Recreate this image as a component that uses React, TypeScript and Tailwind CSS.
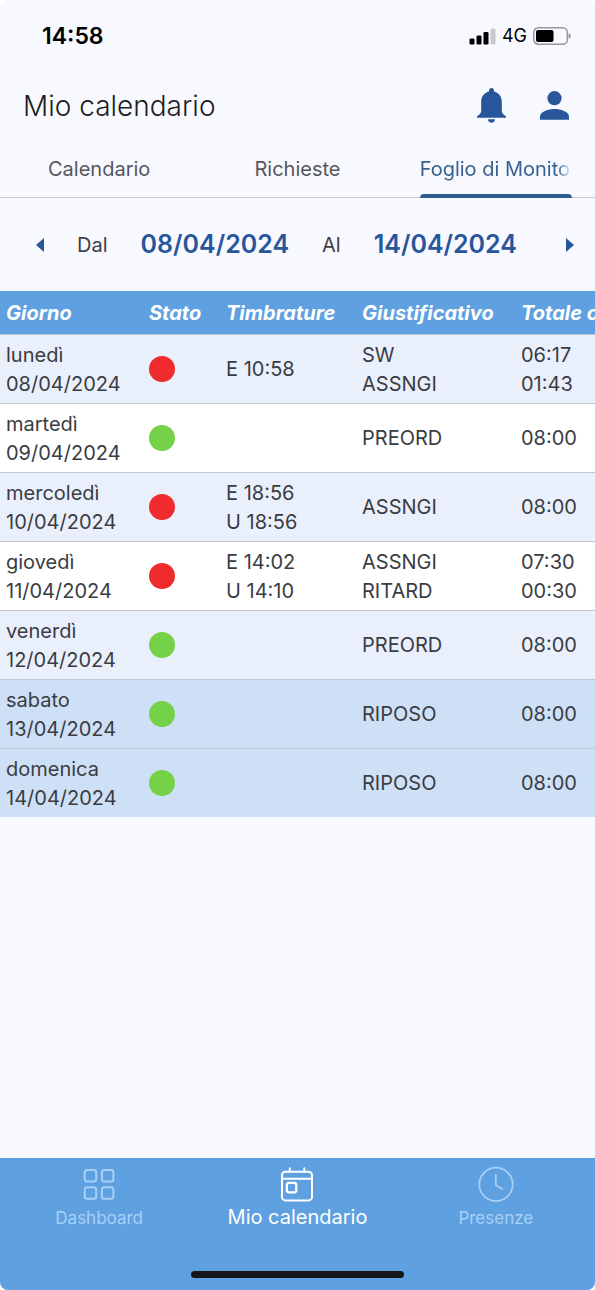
import { useState } from "react";

type Day = {
  name: string;
  date: string;
  ok: boolean;
  stamps: string[];
  reasons: string[];
  totals: string[];
  weekend?: boolean;
};

const DAYS: Day[] = [
  { name: "lunedì", date: "08/04/2024", ok: false, stamps: ["E 10:58"], reasons: ["SW", "ASSNGI"], totals: ["06:17", "01:43"] },
  { name: "martedì", date: "09/04/2024", ok: true, stamps: [], reasons: ["PREORD"], totals: ["08:00"] },
  { name: "mercoledì", date: "10/04/2024", ok: false, stamps: ["E 18:56", "U 18:56"], reasons: ["ASSNGI"], totals: ["08:00"] },
  { name: "giovedì", date: "11/04/2024", ok: false, stamps: ["E 14:02", "U 14:10"], reasons: ["ASSNGI", "RITARD"], totals: ["07:30", "00:30"] },
  { name: "venerdì", date: "12/04/2024", ok: true, stamps: [], reasons: ["PREORD"], totals: ["08:00"] },
  { name: "sabato", date: "13/04/2024", ok: true, stamps: [], reasons: ["RIPOSO"], totals: ["08:00"], weekend: true },
  { name: "domenica", date: "14/04/2024", ok: true, stamps: [], reasons: ["RIPOSO"], totals: ["08:00"], weekend: true },
];

const TABS = ["Calendario", "Richieste", "Foglio di Monitoraggio"];

function StatusBar() {
  return (
    <div className="flex h-[72px] items-center justify-between pr-6 pl-[42px] text-black">
      <span className="text-[23px] font-semibold">14:58</span>
      <div className="flex items-center gap-1.5">
        <svg className="h-[17px] w-[27px]" viewBox="0 0 27 17">
          <rect x="0.5" y="10.5" width="5" height="6" rx="1.2" />
          <rect x="7.5" y="7.5" width="5" height="9" rx="1.2" />
          <rect x="14.5" y="4" width="5" height="12.5" rx="1.2" />
          <rect x="21.5" y="0.5" width="5" height="16" rx="1.2" fill="#c8c9d0" />
        </svg>
        <span className="text-lg">4G</span>
        <svg className="h-[18px] w-[38px]" viewBox="0 0 38 18">
          <rect x="0.8" y="0.8" width="33.5" height="16.4" rx="4.5" fill="none" stroke="#97989c" strokeWidth="1.5" />
          <rect x="3" y="3" width="17.5" height="12" rx="2" />
          <path d="M35.5 6.2c1.6.5 2.3 1.5 2.3 2.8s-.7 2.3-2.3 2.8z" fill="#97989c" />
        </svg>
      </div>
    </div>
  );
}

function Stack({ lines }: { lines: string[] }) {
  return (
    <>
      {lines.map((line) => (
        <div key={line}>{line}</div>
      ))}
    </>
  );
}

function TimesheetTable() {
  return (
    <div className="overflow-x-auto [scrollbar-width:none]">
      <table className="w-full min-w-[640px] table-fixed border-collapse text-left text-xl leading-[29px] whitespace-nowrap">
        <colgroup>
          <col className="w-[143px]" />
          <col className="w-[77px]" />
          <col className="w-[136px]" />
          <col className="w-[159px]" />
          <col />
        </colgroup>
        <thead>
          <tr className="h-[43px] border-b border-[#c3c5ce] bg-[#5ea0e0] text-white italic">
            <th scope="col" className="px-1.5 pt-0.5 font-bold">Giorno</th>
            <th scope="col" className="px-1.5 pt-0.5 font-bold">Stato</th>
            <th scope="col" className="px-1.5 pt-0.5 font-bold">Timbrature</th>
            <th scope="col" className="px-1.5 pt-0.5 font-bold">Giustificativo</th>
            <th scope="col" className="px-1.5 pt-0.5 font-bold">Totale ore</th>
          </tr>
        </thead>
        <tbody>
          {DAYS.map((day) => (
            <tr
              key={day.date}
              className={`border-b border-[#c3c5ce] text-[#3a3c43] last:border-b-0 ${
                day.weekend ? "bg-[#cee0f6]" : "odd:bg-[#eaeffc] even:bg-white"
              }`}
            >
              <td className="px-1.5 pt-1.5 pb-1">
                <Stack lines={[day.name, day.date]} />
              </td>
              <td className="px-1.5">
                <div
                  role="img"
                  aria-label={day.ok ? "Regolare" : "Anomalia"}
                  className={`size-[26px] rounded-full ${day.ok ? "bg-[#74d148]" : "bg-[#ef2b2d]"}`}
                />
              </td>
              <td className="px-1.5 pt-1.5 pb-1"><Stack lines={day.stamps} /></td>
              <td className="px-1.5 pt-1.5 pb-1"><Stack lines={day.reasons} /></td>
              <td className="px-1.5 pt-1.5 pb-1"><Stack lines={day.totals} /></td>
            </tr>
          ))}
        </tbody>
      </table>
    </div>
  );
}

export default function App() {
  const [tab, setTab] = useState(2);

  return (
    <div className="bg-white font-['Inter','Liberation_Sans',sans-serif]">
      <div className="flex min-h-screen flex-col overflow-hidden rounded-lg bg-[#f8f9fe]">
        <StatusBar />

        <header className="flex h-[68px] items-center justify-between pr-[26px] pl-[23px]">
          <h1 className="text-[28px] font-light text-[#1d1e24]">Mio calendario</h1>
          <div className="flex items-center gap-[34px] text-[#28569a]">
            <button type="button" aria-label="Notifiche">
              <svg className="h-[37px] w-[29px]" viewBox="0 0 29 37" fill="currentColor">
                <path d="M14.500 0c1.500 0 2.500 1 2.500 2.300v1.100c5 1.200 7.800 5.200 7.800 10.200v9c0 2.600 1.400 4.200 4.200 5.600v1.500H0v-1.500c2.800-1.400 4.200-3 4.200-5.600v-9c0-5 2.800-9 7.800-10.200V2.300C12 1 13 0 14.500 0z" />
                <path d="M11 31.300h7c0 2-1.500 3.400-3.500 3.400S11 33.300 11 31.300z" />
              </svg>
            </button>
            <button type="button" aria-label="Profilo">
              <svg className="h-[31px] w-[29px]" viewBox="0 0 29 31" fill="currentColor">
                <circle cx="14.5" cy="7.200" r="7.100" />
                <path d="M0 28.800v-3.200C0 20.500 8.500 18 14.500 18S29 20.500 29 25.600v3.200z" />
              </svg>
            </button>
          </div>
        </header>

        <div role="tablist" className="grid h-[58px] grid-cols-3 border-b border-[#c9cad3] text-xl">
          {TABS.map((label, i) => (
            <button
              key={label}
              type="button"
              role="tab"
              aria-selected={tab === i}
              onClick={() => setTab(i)}
              className={`flex min-w-0 flex-col px-[23px] ${tab === i ? "text-[#38628f]" : "text-[#55575e]"}`}
            >
              <span
                className={`h-[54px] w-full overflow-hidden pt-px leading-[56px] whitespace-nowrap ${
                  i === 2 ? "mask-r-from-90% text-left" : "text-center"
                }`}
              >
                {label}
              </span>
              <span className={`h-1 w-full rounded-t-full ${tab === i ? "bg-[#2f5d8f]" : ""}`} />
            </button>
          ))}
        </div>

        <div className="flex h-[93px] items-center justify-between pr-[21px] pl-9 text-xl text-[#3d3f46]">
          <button type="button" aria-label="Periodo precedente" className="text-[#28569a]">
            <svg className="h-[14px] w-[8px]" viewBox="0 0 8 14" fill="currentColor">
              <path d="M8 0v14L0 7z" />
            </svg>
          </button>
          <span>Dal</span>
          <button type="button" className="text-[25px] font-semibold text-[#28569a]">08/04/2024</button>
          <span>Al</span>
          <button type="button" className="text-[25px] font-semibold text-[#28569a]">14/04/2024</button>
          <button type="button" aria-label="Periodo successivo" className="pl-4 text-[#28569a]">
            <svg className="h-[14px] w-[8px]" viewBox="0 0 8 14" fill="currentColor">
              <path d="M0 0v14l8-7z" />
            </svg>
          </button>
        </div>

        <main className="flex-1">
          <TimesheetTable />
        </main>

        <nav className="flex h-[132px] flex-col justify-between bg-[#5ea0e0] pb-3">
          <div className="grid grid-cols-3 pt-2">
            <a href="#dashboard" className="flex flex-col items-center text-[#a9d0f7]">
              <svg className="size-[36px]" viewBox="0 0 36 36" fill="none" stroke="currentColor" strokeWidth="2">
                <rect x="3.700" y="4" width="11.500" height="11.500" rx="2.500" />
                <rect x="20.900" y="4" width="11.500" height="11.500" rx="2.500" />
                <rect x="3.700" y="21.300" width="11.500" height="11.500" rx="2.500" />
                <rect x="20.900" y="21.300" width="11.500" height="11.500" rx="2.500" />
              </svg>
              <span className="text-[17px] leading-[32px]">Dashboard</span>
            </a>
            <a href="#calendario" aria-current="page" className="flex flex-col items-center text-white">
              <svg className="size-[36px]" viewBox="0 0 36 36" fill="none" stroke="currentColor" strokeWidth="2" strokeLinecap="round">
                <rect x="3" y="5.800" width="30" height="28.600" rx="3.500" />
                <path d="M3 12.800h30M10.800 2.200v3.500M25.300 2.200v3.500" />
                <rect x="7.800" y="16.800" width="9.500" height="9.500" rx="2" strokeWidth="2.300" />
              </svg>
              <span className="text-xl leading-[30px]">Mio calendario</span>
            </a>
            <a href="#presenze" className="flex flex-col items-center text-[#a9d0f7]">
              <svg className="size-[36px]" viewBox="0 0 36 36" fill="none" stroke="currentColor" strokeWidth="1.700" strokeLinecap="round" strokeLinejoin="round">
                <circle cx="18" cy="18.400" r="16.700" />
                <path d="M17.800 8.500v10.500l6.500 4" />
              </svg>
              <span className="text-[17px] leading-[32px]">Presenze</span>
            </a>
          </div>
          <div className="h-[7px] w-[213px] self-center rounded-full bg-[#151618]" />
        </nav>
      </div>
    </div>
  );
}
